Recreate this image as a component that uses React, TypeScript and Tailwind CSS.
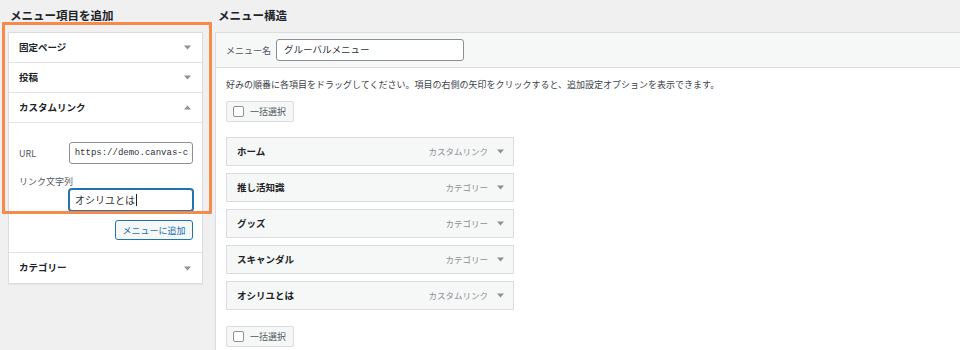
import React from "react";

const FONT = { fontFamily: '"Noto Sans CJK JP", "Noto Sans", "Liberation Sans", sans-serif' };

function Arrow({ up = false }: { up?: boolean }) {
  return (
    <svg width="7" height="5" viewBox="0 0 7 5" className="shrink-0">
      {up ? (
        <polygon points="0,4.5 7,4.5 3.5,0.5" fill="#8c8f94" />
      ) : (
        <polygon points="0,0.5 7,0.5 3.5,4.5" fill="#8c8f94" />
      )}
    </svg>
  );
}

function SectionTitle({ label, up = false, last = false }: { label: string; up?: boolean; last?: boolean }) {
  return (
    <div
      className={`flex items-center justify-between h-[30px] pl-[10px] pr-[11px] ${last ? "" : "border-b border-[#e2e3e5]"} bg-white`}
    >
      <span className="text-[9.5px] font-bold text-[#1d2327] leading-none">{label}</span>
      <Arrow up={up} />
    </div>
  );
}

function Checkbox() {
  return <span className="inline-block w-[11px] h-[11px] border border-[#8c8f94] rounded-[2px] bg-white" />;
}

function SelectAll() {
  return (
    <div className="inline-flex items-center h-[21px] w-[68px] pl-[6px] gap-[6px] border border-[#dcdcde] rounded-[2px] bg-[#f6f7f7]">
      <Checkbox />
      <span className="text-[9px] text-[#50575e] leading-none">一括選択</span>
    </div>
  );
}

function MenuItem({ title, type }: { title: string; type: string }) {
  return (
    <div className="flex items-center justify-between h-[29px] w-[288px] pl-[10px] pr-[9px] bg-[#f6f7f7] border border-[#dcdcde]">
      <span className="text-[9.5px] font-bold text-[#1d2327] leading-none">{title}</span>
      <div className="flex items-center gap-[9px]">
        <span className="text-[8.5px] text-[#8c8f94] leading-none">{type}</span>
        <Arrow />
      </div>
    </div>
  );
}

export default function App() {
  const items = [
    { title: "ホーム", type: "カスタムリンク" },
    { title: "推し活知識", type: "カテゴリー" },
    { title: "グッズ", type: "カテゴリー" },
    { title: "スキャンダル", type: "カテゴリー" },
    { title: "オシリユとは", type: "カスタムリンク" },
  ];
  return (
    <div className="relative w-[960px] h-[350px] overflow-hidden bg-[#f0f0f1]" style={FONT}>
      <div className="flex pl-[8px] pt-[7px]">
        {/* left column */}
        <div className="w-[195px] shrink-0">
          <div className="pl-[2px] h-[17px] text-[11.5px] font-bold text-[#1d2327] leading-[17px]">メニュー項目を追加</div>
          <div className="mt-[8px] border border-[#dcdcde] bg-white shadow-[0_1px_1px_rgba(0,0,0,0.04)]">
            <SectionTitle label="固定ページ" />
            <SectionTitle label="投稿" />
            <SectionTitle label="カスタムリンク" up />
            <div className="border-b border-[#e2e3e5] pt-[19px] pb-[12px] pl-[10px] pr-[9px]">
              <div className="flex items-center">
                <span className="w-[50px] text-[9px] text-[#50575e] leading-none">URL</span>
                <div className="flex items-center h-[22px] w-[125px] px-[5px] border border-[#8c8f94] rounded-[3px] bg-white overflow-hidden">
                  <span
                    className="text-[9px] text-[#2c3338] whitespace-nowrap leading-none"
                    style={{ fontFamily: '"Liberation Mono", "DejaVu Sans Mono", monospace' }}
                  >
                    https://demo.canvas-c
                  </span>
                </div>
              </div>
              <div className="mt-[12px] text-[9px] text-[#50575e] leading-[12px]">リンク文字列</div>
              <div className="flex mt-[1px] pl-[50px]">
                <div className="flex items-center h-[22px] w-[125px] px-[5px] border border-[#2271b1] rounded-[3px] bg-white shadow-[0_0_0_1px_#2271b1]">
                  <span className="text-[10px] text-[#2c3338] leading-none">オシリユとは</span>
                  <span className="ml-[1px] w-[1px] h-[12px] bg-[#1d2327]" />
                </div>
              </div>
              <div className="flex justify-end mt-[9px]">
                <div className="flex items-center justify-center h-[20px] w-[78px] border border-[#2271b1] rounded-[3px] bg-[#f6f7f7]">
                  <span className="text-[9px] text-[#2271b1] leading-none">メニューに追加</span>
                </div>
              </div>
            </div>
            <SectionTitle label="カテゴリー" last />
          </div>
        </div>

        {/* right column */}
        <div className="ml-[12px] flex-1 min-w-0">
          <div className="pl-[3px] h-[17px] text-[11.5px] font-bold text-[#1d2327] leading-[17px]">メニュー構造</div>
          <div className="mt-[8px] h-[340px] border-l border-t border-[#dcdcde] bg-white">
            <div className="flex items-center h-[35px] pl-[10px] bg-[#f6f7f7] border-b border-[#dcdcde]">
              <span className="w-[50px] text-[9px] text-[#50575e] leading-none">メニュー名</span>
              <div className="flex items-center h-[22px] w-[188px] px-[7px] border border-[#8c8f94] rounded-[3px] bg-white">
                <span className="text-[9.5px] text-[#2c3338] leading-none">グルーバルメニュー</span>
              </div>
            </div>
            <div className="pl-[10px] pt-[11px]">
              <p className="text-[9px] text-[#3c434a] leading-[12px] whitespace-nowrap">
                好みの順番に各項目をドラッグしてください。項目の右側の矢印をクリックすると、追加設定オプションを表示できます。
              </p>
              <div className="mt-[10px] flex">
                <SelectAll />
              </div>
              <div className="mt-[15px] flex flex-col gap-[7px]">
                {items.map((it) => (
                  <MenuItem key={it.title} title={it.title} type={it.type} />
                ))}
              </div>
              <div className="mt-[16px] flex">
                <SelectAll />
              </div>
            </div>
          </div>
        </div>
      </div>

      {/* highlight annotation */}
      <div className="absolute left-[2px] top-[22px] w-[210px] h-[192px] border-[3px] border-[#f58a4b] rounded-[1px] pointer-events-none" />
    </div>
  );
}
